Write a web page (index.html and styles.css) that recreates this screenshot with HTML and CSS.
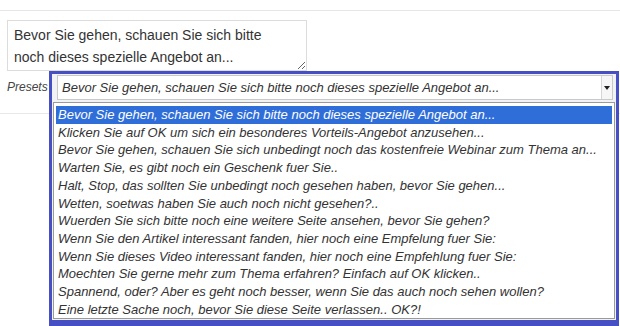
FILE: index.html
```html
<!DOCTYPE html>
<html lang="de">
<head>
  <meta charset="UTF-8">
  <title>Presets</title>
  <link rel="stylesheet" href="styles.css">
</head>
<body>

  <div class="topbar"></div>

  <!-- Nachricht + Presets -->
  <div class="panel">
    <textarea class="message">Bevor Sie gehen, schauen Sie sich bitte noch dieses spezielle Angebot an...</textarea>

    <div class="presets">
      <label class="presets-label">Presets</label>
      <div class="combo">
        <div class="combo-box">
          <span class="combo-value">Bevor Sie gehen, schauen Sie sich bitte noch dieses spezielle Angebot an...</span>
          <span class="combo-arrow"></span>
        </div>

        <div class="combo-drop">
          <ul class="options">
            <li class="selected">Bevor Sie gehen, schauen Sie sich bitte noch dieses spezielle Angebot an...</li>
            <li>Klicken Sie auf OK um sich ein besonderes Vorteils-Angebot anzusehen...</li>
            <li>Bevor Sie gehen, schauen Sie sich unbedingt noch das kostenfreie Webinar zum Thema an...</li>
            <li>Warten Sie, es gibt noch ein Geschenk fuer Sie..</li>
            <li>Halt, Stop, das sollten Sie unbedingt noch gesehen haben, bevor Sie gehen...</li>
            <li>Wetten, soetwas haben Sie auch noch nicht gesehen?..</li>
            <li>Wuerden Sie sich bitte noch eine weitere Seite ansehen, bevor Sie gehen?</li>
            <li>Wenn Sie den Artikel interessant fanden, hier noch eine Empfelung fuer Sie:</li>
            <li>Wenn Sie dieses Video interessant fanden, hier noch eine Empfehlung fuer Sie:</li>
            <li>Moechten Sie gerne mehr zum Thema erfahren? Einfach auf OK klicken..</li>
            <li>Spannend, oder? Aber es geht noch besser, wenn Sie das auch noch sehen wollen?</li>
            <li>Eine letzte Sache noch, bevor Sie diese Seite verlassen.. OK?!</li>
          </ul>
        </div>
      </div>
    </div>
  </div>

</body>
</html>
```

FILE: styles.css
```css
html, body {
  height: 100%;
}

body {
  margin: 0;
  min-height: 326px;
  font-family: "Liberation Sans", Arial, sans-serif;
  color: #333;
  background-color: #fff;
}

.topbar {
  height: 10px;
  border-bottom: 1px solid #e6e6e6;
}

.panel {
  padding: 9px 0 11px 7px;
  border-bottom: 1px solid #e8e8e8;
}

.message {
  display: block;
  box-sizing: border-box;
  width: 300px;
  height: 51px;
  margin: 0;
  padding: 3px 20px 0 6px;
  border: 1px solid #dcdcdc;
  font: 14px/22px "Liberation Sans", Arial, sans-serif;
  color: #333;
  overflow: hidden;
}

.presets {
  display: flex;
  align-items: center;
}

.presets-label {
  width: 42px;
  font-size: 12px;
  font-style: italic;
  color: #444;
}

.combo {
  position: relative;
  z-index: 2;
  box-sizing: border-box;
  width: 570px;
  padding: 1px 3px 2px 5px;
  border: 3px solid #4650c4;
  border-bottom: 0;
  background-color: #f0f2f6;
}

.combo-box {
  display: flex;
  height: 25px;
  box-sizing: border-box;
  border: 1px solid #c9c9c9;
  background-color: #fff;
}

.combo-value {
  flex: 1;
  padding-left: 4px;
  font-size: 13px;
  font-style: italic;
  line-height: 23px;
  white-space: nowrap;
  overflow: hidden;
}

.combo-arrow {
  position: relative;
  width: 10px;
  border-left: 1px solid #d6d6d6;
  background-color: #f6f6f6;
}

.combo-arrow::after {
  content: "";
  position: absolute;
  left: 2px;
  top: 10px;
  border-top: 4px solid #222;
  border-left: 3px solid transparent;
  border-right: 3px solid transparent;
}

.combo-drop {
  position: absolute;
  top: 100%;
  left: -3px;
  right: -3px;
  padding: 0 1px 1px 1px;
  border: 3px solid #4650c4;
  border-top: 0;
  border-bottom-width: 6px;
  background-color: #f0f2f6;
}

.options {
  list-style: none;
  margin: 0;
  padding: 3px 2px 0 2px;
  border: 1px solid #9a9a9a;
  background-color: #fff;
}

.options li {
  padding-left: 2px;
  font-size: 13px;
  font-style: italic;
  line-height: 17.7px;
  white-space: nowrap;
  color: #333;
}

.options li.selected {
  background-color: #2f6ed8;
  color: #fff;
}
```
